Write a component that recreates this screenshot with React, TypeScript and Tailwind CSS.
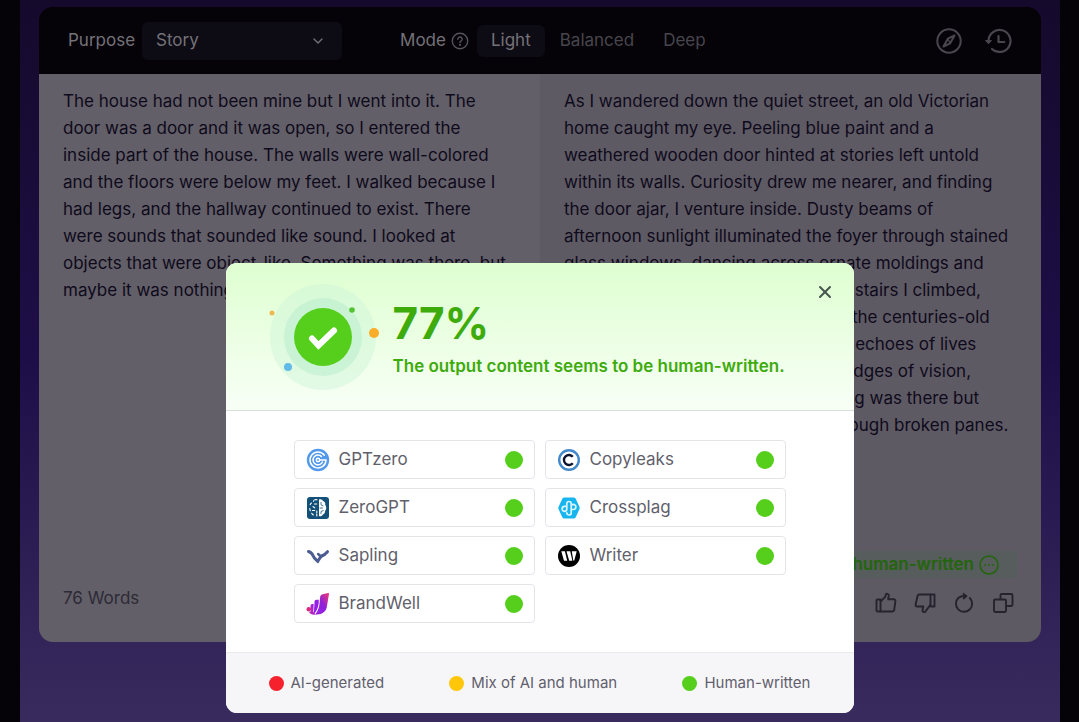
import type { ReactNode } from "react";
import { ChevronDown, X } from "lucide-react";

const source = [
  "The house had not been mine but I went into it. The",
  "door was a door and it was open, so I entered the",
  "inside part of the house. The walls were wall-colored",
  "and the floors were below my feet. I walked because I",
  "had legs, and the hallway continued to exist. There",
  "were sounds that sounded like sound. I looked at",
  "objects that were object-like. Something was there, but",
  "maybe it was nothing. I left.",
];

const output = [
  "As I wandered down the quiet street, an old Victorian",
  "home caught my eye. Peeling blue paint and a",
  "weathered wooden door hinted at stories left untold",
  "within its walls. Curiosity drew me nearer, and finding",
  "the door ajar, I venture inside. Dusty beams of",
  "afternoon sunlight illuminated the foyer through stained",
  "glass windows, dancing across ornate moldings and",
  "worn floorboard. Up those creaking stairs I climbed,",
  "my steps sounding softly all among the centuries-old",
  "wood as the shadows whispered its echoes of lives",
  "once lived. Shapes stole along the edges of vision,",
  "and I could almost swear that nothing was there but",
  "that wind, sighing its way slowly through broken panes.",
];

const detectors: { name: string; icon: ReactNode }[] = [
  {
    name: "GPTzero",
    icon: (
      <svg viewBox="0 0 24 24" className="size-6" fill="none" stroke="#fff" strokeWidth="1.5" strokeLinecap="round">
        <circle cx="12" cy="12" r="11.2" fill="#5299ec" stroke="none" />
        <path d="M18.4 7.2A8 8 0 1 0 20 12h-6" />
        <path d="M15.4 8.4A4.9 4.9 0 1 0 16.4 14" />
        <circle cx="12" cy="12" r="1.7" />
      </svg>
    ),
  },
  {
    name: "Copyleaks",
    icon: (
      <svg viewBox="0 0 24 24" className="size-6" fill="none">
        <circle cx="12" cy="12" r="9.8" stroke="#4388cd" strokeWidth="2.4" />
        <path d="M15.8 8.8A5 5 0 1 0 15.8 15.200" stroke="#0c1230" strokeWidth="2.4" />
      </svg>
    ),
  },
  {
    name: "ZeroGPT",
    icon: (
      <svg viewBox="0 0 24 24" className="size-6" fill="none" stroke="#fff" strokeLinecap="round">
        <rect x="1" y="1" width="22" height="22" rx="3" fill="#135078" stroke="none" />
        <path
          d="M13 3.5c2-.8 3.5.2 4 1.5 2 .6 2.5 2.3 2.2 3.8 1.4 1.7 1.4 4.5 0 6-.1 2.2-1 3.2-2.3 3.7-.7 1.6-2.5 2.3-3.9 1.5z"
          fill="#fff"
          stroke="none"
        />
        <path
          d="M11 3.8c-1.5-.5-3 0-3.500 1.5M5.5 7c-1 .6-1.500 1.500-1.300 2.700M3.800 12.500c0 1.200.3 2 .9 2.700M5.700 17.300c.5 1 1.200 1.600 2.100 1.700M10.800 20V15M8.500 8h2.300M7 10.500l2 1.500M6.500 14.500h2.200"
          strokeWidth="1.1"
          strokeDasharray="2.2 1.3"
        />
        <path d="M15 6.5v2.3l2 1M14 12h2.5M15 17.5v-2l2.3-1" stroke="#135078" strokeWidth=".8" />
      </svg>
    ),
  },
  {
    name: "Crossplag",
    icon: (
      <svg viewBox="0 0 24 24" className="size-6" fill="none">
        <path
          d="M7.3 1.5h9.4c.8 0 1.5.4 1.9 1.1l3.9 8.3c.3.7.3 1.5 0 2.2l-3.900 8.300c-.4.7-1.100 1.100-1.900 1.100H7.300c-.8 0-1.500-.4-1.900-1.100l-3.900-8.300c-.3-.7-.3-1.500 0-2.200l3.900-8.300c.4-.7 1.100-1.100 1.900-1.100z"
          fill="#17b5ef"
        />
        <path
          d="M9.800 10.300H7.600a2.500 2.500 0 1 0 0 5c1.500 0 2.200-1 2.200-2.300V7.700a2.200 2.200 0 0 1 4.400 0v9a2.200 2.200 0 0 1-4.400.2M14.200 13.500h2.200a2.500 2.500 0 1 0-2.200-3.700"
          stroke="#d9f5ff"
          strokeWidth="1.7"
          strokeLinecap="round"
        />
      </svg>
    ),
  },
  {
    name: "Sapling",
    icon: (
      <svg viewBox="0 0 24 24" className="size-6" fill="none" stroke="#4b5c93" strokeWidth="3" strokeLinecap="round">
        <path d="M2.500 7.500c2.500.8 3.800 2.200 4.700 4.500.8 2.200 2.500 3.300 4.600 5.300 1.800-2.600 2.300-4.300 4-5.300 2.300-1 4-2.300 5.700-4.300" />
        <path d="M12.200 10c1 1.500 2 2 3.300 2" strokeWidth="2.600" />
      </svg>
    ),
  },
  {
    name: "Writer",
    icon: (
      <svg viewBox="0 0 24 24" className="size-6">
        <circle cx="12" cy="12" r="11" fill="#000" />
        <path d="M4.300 7.200h3.600l2.300 9.600H7z" fill="#fff" />
        <path d="M9.500 7.200h3.700l2.200 9.600h-3.200z" fill="#fff" />
        <path d="M14.800 7.200h4.900l-2.400 9.300h-1z" fill="#fff" />
      </svg>
    ),
  },
  {
    name: "BrandWell",
    icon: (
      <svg viewBox="0 0 24 24" className="size-6">
        <defs>
          <linearGradient id="brandwell" x1="0" y1="1" x2="1" y2="0">
            <stop offset="0" stopColor="#9b1fe8" />
            <stop offset=".5" stopColor="#8f20dc" />
            <stop offset="1" stopColor="#ee3b6a" />
          </linearGradient>
        </defs>
        <path
          d="M14.2 4.5c.4-1.2 1.3-1.9 2.7-2.2l5-1.3c.8-.2 1.2.3 1.1 1l-2.200 13c-.7 4-3.700 6.600-7.800 7.200l-4 .5c3.300-3.700 4.600-8.500 4.700-13.500z"
          fill="url(#brandwell)"
        />
        <path d="M8.5 10c0-1.5.8-2.3 2-2.300h2.300c.3 5.500-1.300 10.300-4.800 14.300-.2-4 .5-8 .5-12z" fill="#9420e6" />
        <path d="M4.5 14c0-1.300.8-2 1.800-2h1.400c-.3 3.800.1 6.500-1 9.500-1.500-1.800-2.200-4-2.200-7.500z" fill="#a822d8" />
        <circle cx="2.8" cy="17.3" r="2.3" fill="#d92c7c" />
        <path d="M3 20l3.5-1.500 3 4C6.500 23 4 22 3 20z" fill="#b524c4" />
      </svg>
    ),
  },
];

const legend = [
  { label: "AI-generated", color: "bg-[#f5222d]" },
  { label: "Mix of AI and human", color: "bg-[#ffc60a]" },
  { label: "Human-written", color: "bg-[#55cf1b]" },
];

function Toolbar() {
  return (
    <header className="flex h-[67px] items-center bg-[#050208] pr-7 pl-[29px] text-[17px] text-[#747278]">
      <label htmlFor="purpose">Purpose</label>
      <div className="relative ml-[7px] w-[200px]">
        <select
          id="purpose"
          className="h-[38px] w-full appearance-none rounded-md bg-[#0d0b14] pl-[14px] text-[#747278]"
        >
          <option>Story</option>
        </select>
        <ChevronDown className="pointer-events-none absolute top-[11px] right-4 size-4" />
      </div>
      <span className="ml-[58px]">Mode</span>
      <button aria-label="About modes" className="ml-[5px] text-[#56545b]">
        <svg viewBox="0 0 18 18" className="size-[18px]" fill="none" stroke="currentColor" strokeWidth="1.4" strokeLinecap="round">
          <circle cx="9" cy="9" r="7.7" />
          <path d="M6.8 7.200a2.200 2.200 0 1 1 3.200 2c-.7.4-1 .7-1 1.400" />
          <circle cx="9" cy="12.9" r=".4" fill="currentColor" />
        </svg>
      </button>
      <button className="ml-2 h-8 rounded-md bg-[#0d0b14] px-[14px]">Light</button>
      <button className="ml-[15px] text-[#48464d]">Balanced</button>
      <button className="ml-[29px] text-[#48464d]">Deep</button>
      <div className="ml-auto flex items-center gap-[21px] pr-px text-[#49474e]">
        <button aria-label="Explore">
          <svg viewBox="0 0 28 28" className="size-7" fill="none" stroke="currentColor" strokeWidth="2" strokeLinejoin="round">
            <circle cx="14" cy="14" r="11.7" />
            <path d="M19.5 8.5l-6.700 3.200-4.300 7.800 6.700-3.200z" />
            <path d="M12.8 11.7l2.400 4.600" strokeWidth="1.4" />
          </svg>
        </button>
        <button aria-label="History">
          <svg viewBox="0 0 28 28" className="size-7" fill="none" stroke="currentColor" strokeWidth="2.2" strokeLinecap="round" strokeLinejoin="round">
            <path d="M4.5 14A11 11 0 1 1 8 22" />
            <path d="M1.8 13.5h5.400l-2.700 2.800z" fill="currentColor" strokeWidth="1.2" />
            <path d="M14.5 9v6h5.800" />
          </svg>
        </button>
      </div>
    </header>
  );
}

function Actions() {
  return (
    <div className="flex items-center justify-end gap-[17px] pr-[3px] text-[#26222e]">
      <button aria-label="Like">
        <svg viewBox="0 0 22 22" className="size-[22px]" fill="none" stroke="currentColor" strokeWidth="1.9" strokeLinejoin="round">
          <path d="M1.5 8.5a1 1 0 0 1 1-1h3v12h-2.800a1.200 1.200 0 0 1-1.200-1.200z" />
          <path d="M5.5 9.5l4.700-4.700c.4-.4.3-1.300.5-2.100.3-1.300 3.300-1.300 3.100 1L13.200 7.300h5.600c1 0 1.800.8 1.600 1.900l-1.200 8.800c-.1.900-.8 1.500-1.700 1.500h-12" />
        </svg>
      </button>
      <button aria-label="Dislike">
        <svg viewBox="0 0 22 22" className="size-[22px] rotate-180" fill="none" stroke="currentColor" strokeWidth="1.9" strokeLinejoin="round">
          <path d="M1.5 7.5h4v12h-4z" />
          <path d="M5.5 9.5l4-5.500c.5-.8.8-1.600 1.500-2 1.300-.5 2.700.5 2.500 1.700l-.8 3.800h6c1.300 0 2 1 1.700 2l-2 8.700c-.2.800-.8 1.300-1.700 1.300H5.500" />
        </svg>
      </button>
      <button aria-label="Regenerate">
        <svg viewBox="0 0 22 22" className="size-[22px]" fill="none" stroke="currentColor" strokeWidth="1.9" strokeLinecap="round" strokeLinejoin="round">
          <path d="M16.8 6A8.100 8.100 0 1 1 5.500 5.800C7.200 4.300 9.500 3.700 12.500 4" />
          <path d="M10.500 1.300l3.700 2.800-3.200 2.900z" fill="currentColor" strokeWidth="1" />
        </svg>
      </button>
      <button aria-label="Copy">
        <svg viewBox="0 0 22 22" className="size-[22px]" fill="none" stroke="currentColor" strokeWidth="1.9" strokeLinejoin="round">
          <rect x="2" y="7.5" width="12" height="12.5" rx="1.2" />
          <path d="M8.5 7.500V3.200c0-.7.500-1.200 1.200-1.200h9.600c.7 0 1.200.5 1.200 1.200v9.600c0 .7-.5 1.200-1.200 1.200H14" />
        </svg>
      </button>
    </div>
  );
}

function ResultBadge() {
  return (
    <svg viewBox="0 0 112 108" className="h-[108px] w-28">
      <circle cx="55" cy="54" r="53" fill="#cdf5d8" opacity=".45" />
      <circle cx="55" cy="54" r="39" fill="#bcefce" opacity=".6" />
      <circle cx="55" cy="54" r="29" fill="#55cf1b" />
      <path d="M44 55.500l6.500 7L66 47.500" fill="none" stroke="#fff" strokeWidth="6" strokeLinecap="round" />
      <circle cx="4" cy="30" r="2.5" fill="#eeb950" />
      <circle cx="84" cy="27" r="2.8" fill="#55c234" />
      <circle cx="106" cy="50" r="5" fill="#fbac28" />
      <circle cx="20" cy="84" r="4" fill="#61bbe8" />
    </svg>
  );
}

function ResultModal() {
  return (
    <section
      role="dialog"
      aria-label="Detection result"
      className="w-[628px] overflow-hidden rounded-[11px] bg-white text-[#625f6c]"
    >
      <div className="flex h-[148px] border-b border-[#d9dedb] bg-linear-to-b from-[#deffd0] to-[#f8fff6] pr-[19px] pl-[42px]">
        <div className="pt-5">
          <ResultBadge />
        </div>
        <div className="flex-1 pt-9 pl-[13px] whitespace-nowrap text-[#3eab0c]">
          <h2 className="text-[44px] leading-[48px] font-bold [font-optical-sizing:none]">77%</h2>
          <p className="mt-[6px] text-[17px] leading-[26px] font-semibold">
            The output content seems to be human-written.
          </p>
        </div>
        <button aria-label="Close" className="mt-[19px] size-5 text-[#4b5850]">
          <X className="size-5" strokeWidth={2.5} />
        </button>
      </div>

      <ul className="grid grid-cols-2 gap-x-[10px] gap-y-[9px] px-[68px] py-[29px]">
        {detectors.map((d) => (
          <li key={d.name} className="flex h-[39px] items-center rounded border border-[#e4e3e8] px-[11px] text-[17px]">
            {d.icon}
            <span className="ml-[9px]">{d.name}</span>
            <span className="ml-auto size-[18px] rounded-full bg-[#55cf1b]" />
          </li>
        ))}
      </ul>

      <footer className="flex h-[61px] items-center justify-between border-t border-[#ebeaef] bg-[#f6f6f9] px-[43px] text-[15px]">
        {legend.map((l) => (
          <span key={l.label} className="flex items-center gap-[7px]">
            <span className={`size-[15px] rounded-full ${l.color}`} />
            {l.label}
          </span>
        ))}
      </footer>
    </section>
  );
}

export default function App() {
  return (
    <div className="relative min-h-screen bg-[#050208] pr-[19px] pl-5 font-['Inter',sans-serif]">
      <main className="min-h-screen bg-linear-to-b from-[#150a2c] via-[#1e0e48] to-[#3a2b5e] px-[19px] pt-[7px] pb-20">
        <div className="overflow-hidden rounded-[14px]">
          <Toolbar />
          <div className="grid min-h-[568px] grid-cols-2 text-[17px] leading-[27px] text-[#0f0a1b]">
            <div className="flex flex-col bg-[#625f68] px-6 pt-[14px] pb-[30px]">
              <p className="whitespace-pre">{source.join("\n")}</p>
              <p className="mt-auto text-[#2d2a36]">76 Words</p>
            </div>
            <div className="flex flex-col bg-[#5e5a64] px-6 pt-[14px] pb-7">
              <p className="whitespace-pre">{output.join("\n")}</p>
              <div className="mt-auto flex justify-end">
                <p className="flex items-center gap-[5px] rounded bg-[#575c5c] pr-[18px] pl-3 font-semibold whitespace-nowrap text-[#23650c]">
                  The output seems to be human-written
                  <svg viewBox="0 0 20 20" className="size-5" fill="none" stroke="currentColor" strokeWidth="1.5">
                    <circle cx="10" cy="10" r="9" />
                    <path d="M5.5 10h1.5M9.25 10h1.5M13 10h1.5" strokeWidth="1.8" />
                  </svg>
                </p>
              </div>
              <div className="mt-[14px]">
                <Actions />
              </div>
            </div>
          </div>
        </div>
      </main>

      <div className="absolute inset-x-0 top-[263px] flex justify-center">
        <ResultModal />
      </div>
    </div>
  );
}
